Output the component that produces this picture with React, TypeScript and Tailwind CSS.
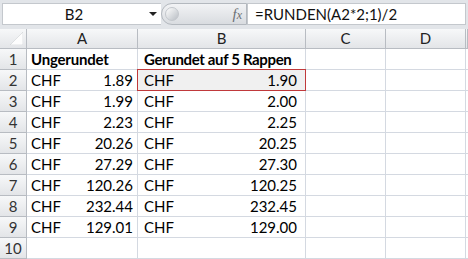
import React from "react";

type Row = { n: number; a?: string; b?: string; bold?: boolean; aText?: string; bText?: string };

const rows: Row[] = [
  { n: 1, aText: "Ungerundet", bText: "Gerundet auf 5 Rappen", bold: true },
  { n: 2, a: "1.89", b: "1.90" },
  { n: 3, a: "1.99", b: "2.00" },
  { n: 4, a: "2.23", b: "2.25" },
  { n: 5, a: "20.26", b: "20.25" },
  { n: 6, a: "27.29", b: "27.30" },
  { n: 7, a: "120.26", b: "120.25" },
  { n: 8, a: "232.44", b: "232.45" },
  { n: 9, a: "129.01", b: "129.00" },
  { n: 10 },
];

const headCell =
  "flex items-center justify-center border-r border-b border-[#b8bcc2] bg-gradient-to-b from-[#f7f8f9] to-[#e3e5e8] text-[#222]";
const grid = "border-r border-b border-[#d4d9e1]";

export default function App() {
  return (
    <div className="w-[468px] h-[259px] overflow-hidden bg-white font-['Lato','Liberation_Sans',sans-serif] text-[15px] leading-none text-black">
      {/* formula bar */}
      <div className="h-[29px] bg-[#e2e5e9] flex items-start pt-[3px] pl-[2px] pr-[2px]">
        <div className="w-[159px] h-[22px] bg-white border border-[#c4c8cd] border-r-0 flex items-center">
          <span className="w-[142px] text-center text-[#111]">B2</span>
          <span className="w-0 h-0 border-l-[4px] border-r-[4px] border-t-[4px] border-l-transparent border-r-transparent border-t-[#222] ml-[4px]" />
        </div>
        <div className="w-[86px] h-[22px] rounded-l-full bg-gradient-to-b from-[#f2f3f5] to-[#d9dce0] border border-[#b3b8be] flex items-center pl-[3px]">
          <div className="w-[14px] h-[14px] rounded-full bg-gradient-to-br from-[#ffffff] to-[#b9bec4] border border-[#c3c7cc]" />
          <span className="ml-auto mr-[4px] font-['Liberation_Serif',serif] italic text-[15px] text-[#6b6f74]">
            f<span className="text-[12px]">x</span>
          </span>
        </div>
        <div className="flex-1 h-[22px] bg-white border border-[#c4c8cd] flex items-center pl-[7px] text-[#111]">
          =RUNDEN(A2*2;1)/2
        </div>
      </div>

      {/* sheet */}
      <div className="grid grid-cols-[27px_111px_168px_80px_80px_2px] grid-rows-[20px_repeat(10,21px)]">
        <div className={headCell + " relative"}>
          <svg className="absolute right-[3px] bottom-[3px]" width="13" height="13" viewBox="0 0 13 13">
            <polygon points="13,0 13,13 0,13" fill="#fdfdfd" stroke="#c7cacd" strokeWidth="0.5" />
          </svg>
        </div>
        <div className={headCell}>A</div>
        <div className={headCell}>B</div>
        <div className={headCell}>C</div>
        <div className={headCell}>D</div>
        <div className={headCell} />

        {rows.map((r) => (
          <React.Fragment key={r.n}>
            <div className={headCell + " text-[#333]"}>{r.n}</div>
            <div className={grid + " flex items-center pl-[4px] pr-[4px] whitespace-nowrap"}>
              {r.bold ? (
                <span className="font-bold tracking-[-0.2px]">{r.aText}</span>
              ) : r.a ? (
                <>
                  <span>CHF</span>
                  <span className="ml-auto">{r.a}</span>
                </>
              ) : null}
            </div>
            <div
              className={
                "flex items-center pl-[6px] pr-[8px] whitespace-nowrap " +
                (r.n === 2
                  ? "bg-[#f0f0f0] border border-[#c0393b] -mt-px -ml-px"
                  : grid)
              }
            >
              {r.bold ? (
                <span className="font-bold tracking-[-0.35px]">{r.bText}</span>
              ) : r.b ? (
                <>
                  <span>CHF</span>
                  <span className="ml-auto">{r.b}</span>
                </>
              ) : null}
            </div>
            <div className={grid} />
            <div className={grid} />
            <div className="border-b border-[#d4d9e1]" />
          </React.Fragment>
        ))}
      </div>
    </div>
  );
}
